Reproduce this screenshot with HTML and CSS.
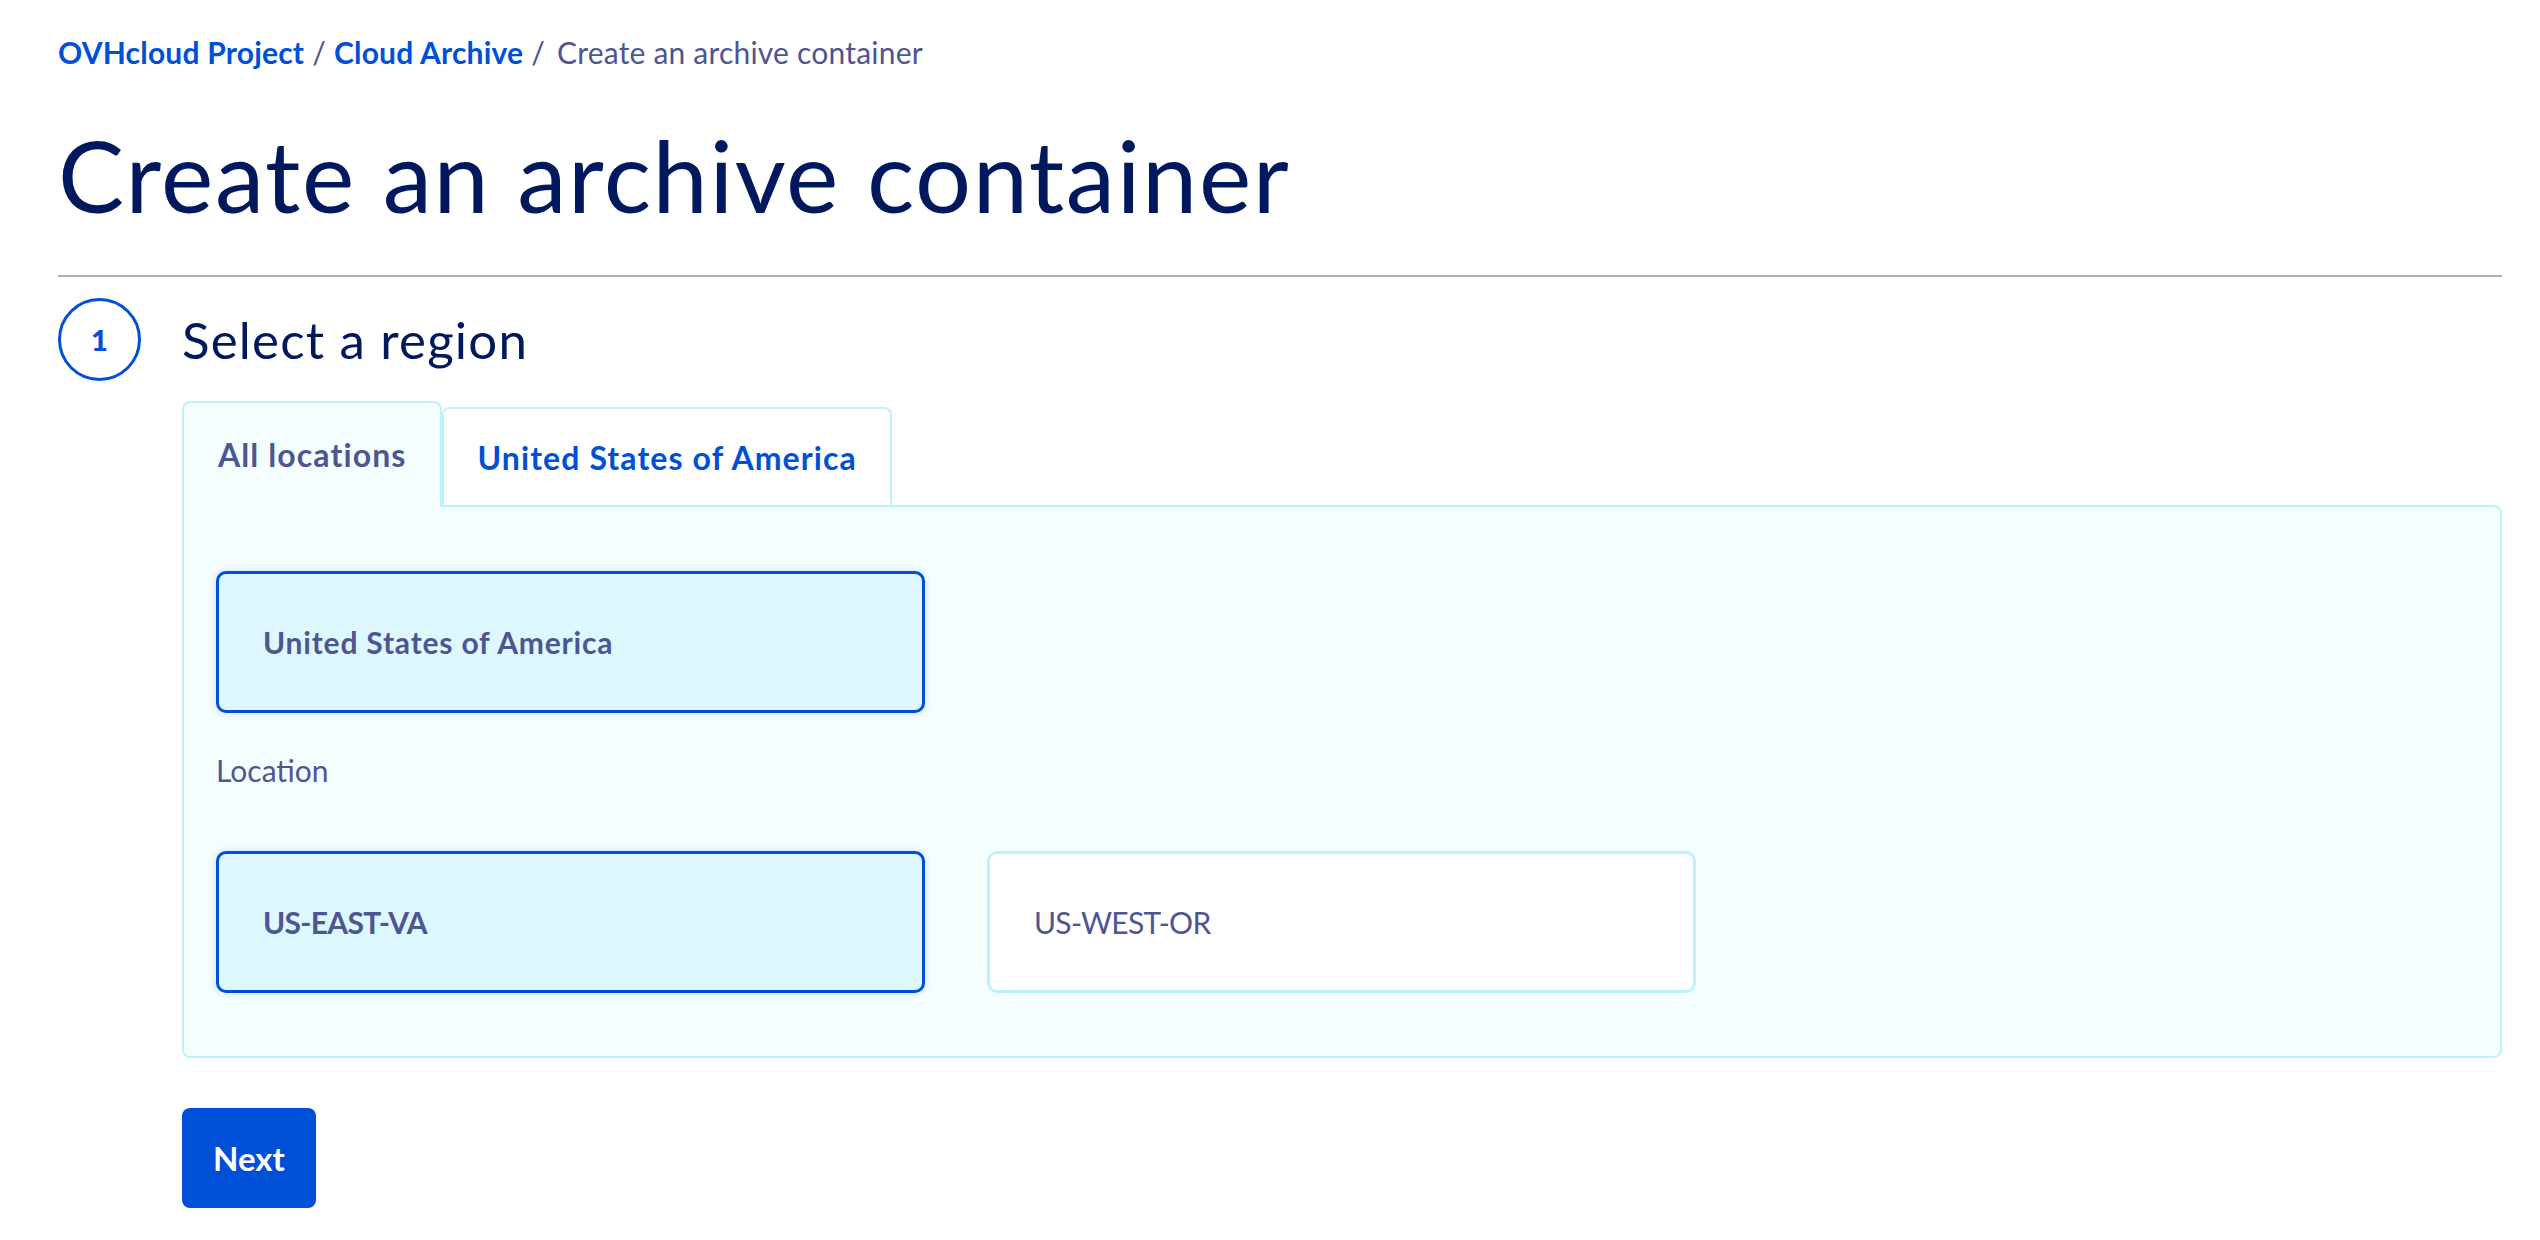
FILE: index.html
```html
<!DOCTYPE html>
<html lang="en">
<head>
	<meta charset="UTF-8">
	<title>Create an archive container</title>
	<link rel="stylesheet" href="styles.css">
</head>
<body>
	<div class="page">
		<nav class="crumbs">
			<a href="#" class="crumb-link">OVHcloud Project</a><span class="sep">/</span><a href="#" class="crumb-link">Cloud Archive</a><span class="sep sep-last">/</span><span class="crumb-current">Create an archive container</span>
		</nav>
		<h1 class="title">Create an archive container</h1>
		<hr class="rule">

		<section class="step">
			<div class="step-num">1</div>
			<h2 class="step-title">Select a region</h2>
			<div class="step-body">
				<div class="tabs">
					<div class="tab tab-active">All locations</div>
					<div class="tab">United States of America</div>
				</div>
				<div class="panel">
					<div class="tile tile-on">United States of America</div>
					<div class="label">Location</div>
					<div class="tile-row">
						<div class="tile tile-on tile-code">US-EAST-VA</div>
						<div class="tile tile-code">US-WEST-OR</div>
					</div>
				</div>
				<button class="btn">Next</button>
			</div>
		</section>
	</div>
</body>
</html>
```

FILE: styles.css
```css
*{margin:0;padding:0;box-sizing:border-box;}
body{
	background:#fff;
	font-family:"Lato","Liberation Sans",sans-serif;
	color:#4d5592;
}
.page{
	padding:32px 38px 0 58px;
}

/* breadcrumb */
.crumbs{
	font-size:30px;
	line-height:40px;
	letter-spacing:0.2px;
	white-space:nowrap;
}
.crumb-link{
	color:#0050d7;
	font-weight:700;
	text-decoration:none;
}
.sep{
	color:#4d5592;
	margin:0 8px;
}
.sep-last{
	margin-right:12px;
}
.crumb-current{
	color:#4d5592;
}

.title{
	margin-top:43px;
	font-size:99px;
	line-height:119px;
	letter-spacing:1.6px;
	font-weight:400;
	color:#00185e;
}
.rule{
	margin-top:41px;
	border:none;
	height:2px;
	background:#b1b1b1;
}

/* step */
.step{
	display:grid;
	grid-template-columns:83px 1fr;
	column-gap:41px;
	margin-top:21px;
}
.step-num{
	width:83px;
	height:83px;
	border:3px solid #0050d7;
	border-radius:50%;
	color:#0050d7;
	font-size:29px;
	font-weight:900;
	display:flex;
	align-items:center;
	justify-content:center;
}
.step-title{
	align-self:center;
	font-size:51px;
	font-weight:400;
	letter-spacing:1.2px;
	color:#00185e;
	line-height:60px;
}
.step-body{
	grid-column:2;
	padding-top:20px;
}

/* tabs */
.tabs{
	display:flex;
	align-items:flex-end;
}
.tab{
	height:98px;
	padding:0 33px;
	display:flex;
	align-items:center;
	background:#fff;
	border:2px solid #bef1ff;
	border-bottom:none;
	border-radius:8px 8px 0 0;
	color:#0050d7;
	font-size:32px;
	font-weight:700;
	letter-spacing:1.1px;
	white-space:nowrap;
}
.tab-active{
	height:106px;
	padding:0 34px 2px;
	background:#f5feff;
	color:#4d5592;
	margin-bottom:-2px;
	position:relative;
}

.panel{
	background:#f5feff;
	border:2px solid #bef1ff;
	border-radius:0 8px 8px 8px;
	padding:64px 32px 63px;
}
.tile{
	width:709px;
	height:142px;
	display:flex;
	align-items:center;
	padding-left:44px;
	background:#fff;
	border:3px solid #bef1ff;
	border-radius:10px;
	font-size:30px;
	color:#4d5592;
}
.tile-on{
	background:#def8ff;
	border-color:#0050d7;
	font-weight:700;
	letter-spacing:0.8px;
	box-shadow:0 0 8px rgba(0,80,215,0.18);
}
.tile-code{
	letter-spacing:-0.7px;
}
.label{
	margin-top:39px;
	font-size:30px;
	line-height:36px;
}
.tile-row{
	display:flex;
	gap:62px;
	margin-top:63px;
}

.btn{
	margin-top:50px;
	height:100px;
	padding:0 31px;
	background:#0050d7;
	color:#fff;
	border:none;
	border-radius:8px;
	font-family:inherit;
	font-size:33px;
	font-weight:700;
}
```
